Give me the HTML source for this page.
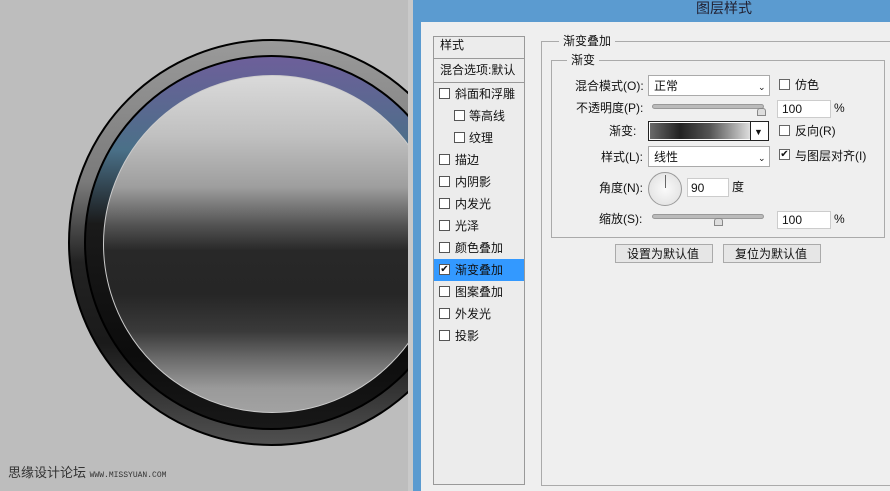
<!DOCTYPE html>
<html><head><meta charset="utf-8"><style>
*{margin:0;padding:0;box-sizing:border-box}
body{width:890px;height:491px;overflow:hidden;background:#bdbdbd;position:relative;font-family:"Liberation Sans","Microsoft YaHei","Noto Sans CJK SC",sans-serif;font-size:12px;color:#111}
.abs{position:absolute}
.c{position:absolute;border-radius:50%}
.t{position:absolute;white-space:nowrap;font-size:12px;line-height:14px}
.cb{position:absolute;width:11px;height:11px;border:1px solid #555;background:#fff}
.row{position:absolute;left:434px;width:90px;height:22px;border-bottom:1px solid #fafafa}
</style></head><body>
<!-- circle -->
<div class="c" style="left:68px;top:39px;width:407px;height:407px;background:linear-gradient(#9a9a9a,#7a7a7a 35%,#222 55%,#1a1a1a 75%,#505050);border:2px solid #000"></div>
<div class="c" style="left:84px;top:55px;width:375px;height:375px;background:linear-gradient(#6d5f9a,#4a7088 25%,#1a1a1a 45%,#0c0c0c 80%,#181818);border:2px solid #000"></div>
<div class="c" style="left:103px;top:75px;width:338px;height:338px;background:linear-gradient(#dadada,#c0c0c0 18%,#9e9e9e 33%,#555 44%,#282828 52%,#262626 65%,#3a3a3a 76%,#6a6a6a 84%,#9a9a9a 93%,#a2a2a2);border:1px solid #ccc"></div>
<div class="t" style="left:8px;top:466px;font-size:13px;color:#333">思缘设计论坛 <span style="font-size:8px;font-family:'Liberation Mono',monospace">WWW.MISSYUAN.COM</span></div>
<!-- dialog -->
<div class="abs" style="left:408px;top:0;width:5px;height:491px;background:#c9c9c9"></div>
<div class="abs" style="left:413px;top:0;width:477px;height:491px;background:#5b9bd0"></div>
<div class="t" style="left:696px;top:0;font-size:14px;line-height:16px;color:#223">图层样式</div>
<div class="abs" style="left:421px;top:22px;width:469px;height:469px;background:#efefef"></div>
<!-- list -->
<div class="abs" style="left:433px;top:36px;width:92px;height:449px;border:1px solid #999;background:#ececec"></div>
<div class="row" style="top:37px;height:22px;border-bottom:1px solid #999"></div><div class="t" style="left:440px;top:38px">样式</div>
<div class="row" style="top:60px;height:23px;border-bottom:1px solid #999"></div><div class="t" style="left:440px;top:63px">混合选项:默认</div>
<div class="row" style="top:259px;background:#3399ff;border:none"></div>
<div class="cb" style="left:439px;top:88px"></div><div class="t" style="left:455px;top:87px">斜面和浮雕</div>
<div class="cb" style="left:454px;top:110px"></div><div class="t" style="left:469px;top:109px">等高线</div>
<div class="cb" style="left:454px;top:132px"></div><div class="t" style="left:469px;top:131px">纹理</div>
<div class="cb" style="left:439px;top:154px"></div><div class="t" style="left:455px;top:153px">描边</div>
<div class="cb" style="left:439px;top:176px"></div><div class="t" style="left:455px;top:175px">内阴影</div>
<div class="cb" style="left:439px;top:198px"></div><div class="t" style="left:455px;top:197px">内发光</div>
<div class="cb" style="left:439px;top:220px"></div><div class="t" style="left:455px;top:219px">光泽</div>
<div class="cb" style="left:439px;top:242px"></div><div class="t" style="left:455px;top:241px">颜色叠加</div>
<div class="cb" style="left:439px;top:264px;font-size:10px;line-height:9px;text-align:center">✔</div><div class="t" style="left:455px;top:263px">渐变叠加</div>
<div class="cb" style="left:439px;top:286px"></div><div class="t" style="left:455px;top:285px">图案叠加</div>
<div class="cb" style="left:439px;top:308px"></div><div class="t" style="left:455px;top:307px">外发光</div>
<div class="cb" style="left:439px;top:330px"></div><div class="t" style="left:455px;top:329px">投影</div>
<!-- groups -->
<div class="abs" style="left:541px;top:41px;width:360px;height:445px;border:1px solid #aaa"></div>
<div class="t" style="left:559px;top:34px;background:#efefef;padding:0 4px">渐变叠加</div>
<div class="abs" style="left:551px;top:60px;width:334px;height:178px;border:1px solid #aaa"></div>
<div class="t" style="left:567px;top:53px;background:#efefef;padding:0 4px">渐变</div>
<div class="t" style="left:575px;top:79px">混合模式(O):</div>
<div class="abs" style="left:648px;top:75px;width:122px;height:21px;border:1px solid #aaa;background:#fff"></div>
<div class="t" style="left:654px;top:79px">正常</div><div class="t" style="left:758px;top:80px;font-size:9px">⌄</div>
<div class="cb" style="left:779px;top:79px;border-color:#666"></div><div class="t" style="left:795px;top:78px">仿色</div>
<div class="t" style="left:576px;top:101px">不透明度(P):</div>
<div class="abs" style="left:652px;top:104px;width:112px;height:5px;border-radius:3px;background:#bbb;border:1px solid #999"></div>
<div class="abs" style="left:757px;top:108px;width:9px;height:8px;background:#ddd;border:1px solid #888;border-radius:3px 3px 0 0"></div>
<div class="abs" style="left:777px;top:100px;width:54px;height:18px;border:1px solid #ccc;background:#fff"></div><div class="t" style="left:782px;top:102px">100</div><div class="t" style="left:834px;top:101px">%</div>
<div class="t" style="left:609px;top:124px">渐变:</div>
<div class="abs" style="left:648px;top:121px;width:121px;height:20px;border:1px solid #222;background:#fff"></div>
<div class="abs" style="left:650px;top:123px;width:100px;height:16px;background:linear-gradient(90deg,#6a6a6a,#222 30%,#555 60%,#ddd)"></div>
<div class="abs" style="left:750px;top:122px;width:1px;height:18px;background:#222"></div>
<div class="t" style="left:754px;top:125px;font-size:9px">▼</div>
<div class="cb" style="left:779px;top:125px;border-color:#666"></div><div class="t" style="left:795px;top:124px">反向(R)</div>
<div class="t" style="left:601px;top:150px">样式(L):</div>
<div class="abs" style="left:648px;top:146px;width:122px;height:21px;border:1px solid #aaa;background:#fff"></div>
<div class="t" style="left:654px;top:150px">线性</div><div class="t" style="left:758px;top:151px;font-size:9px">⌄</div>
<div class="cb" style="left:779px;top:149px;border-color:#666;font-size:10px;line-height:9px;text-align:center">✔</div><div class="t" style="left:795px;top:149px">与图层对齐(I)</div>
<div class="t" style="left:599px;top:181px">角度(N):</div>
<div class="c" style="left:648px;top:172px;width:34px;height:34px;border:1px solid #999;background:radial-gradient(#fafafa,#ddd)"></div>
<div class="abs" style="left:665px;top:175px;width:1px;height:13px;background:#666"></div>
<div class="abs" style="left:687px;top:178px;width:42px;height:19px;border:1px solid #ccc;background:#fff"></div><div class="t" style="left:691px;top:181px">90</div><div class="t" style="left:732px;top:180px">度</div>
<div class="t" style="left:599px;top:212px">缩放(S):</div>
<div class="abs" style="left:652px;top:214px;width:112px;height:5px;border-radius:3px;background:#bbb;border:1px solid #999"></div>
<div class="abs" style="left:714px;top:218px;width:9px;height:8px;background:#ddd;border:1px solid #888;border-radius:3px 3px 0 0"></div>
<div class="abs" style="left:777px;top:211px;width:54px;height:18px;border:1px solid #ccc;background:#fff"></div><div class="t" style="left:782px;top:213px">100</div><div class="t" style="left:834px;top:212px">%</div>
<div class="abs" style="left:615px;top:244px;width:98px;height:19px;border:1px solid #aaa;background:#e6e6e6"></div><div class="t" style="left:627px;top:247px">设置为默认值</div>
<div class="abs" style="left:723px;top:244px;width:98px;height:19px;border:1px solid #aaa;background:#e6e6e6"></div><div class="t" style="left:735px;top:247px">复位为默认值</div>
</body></html>
